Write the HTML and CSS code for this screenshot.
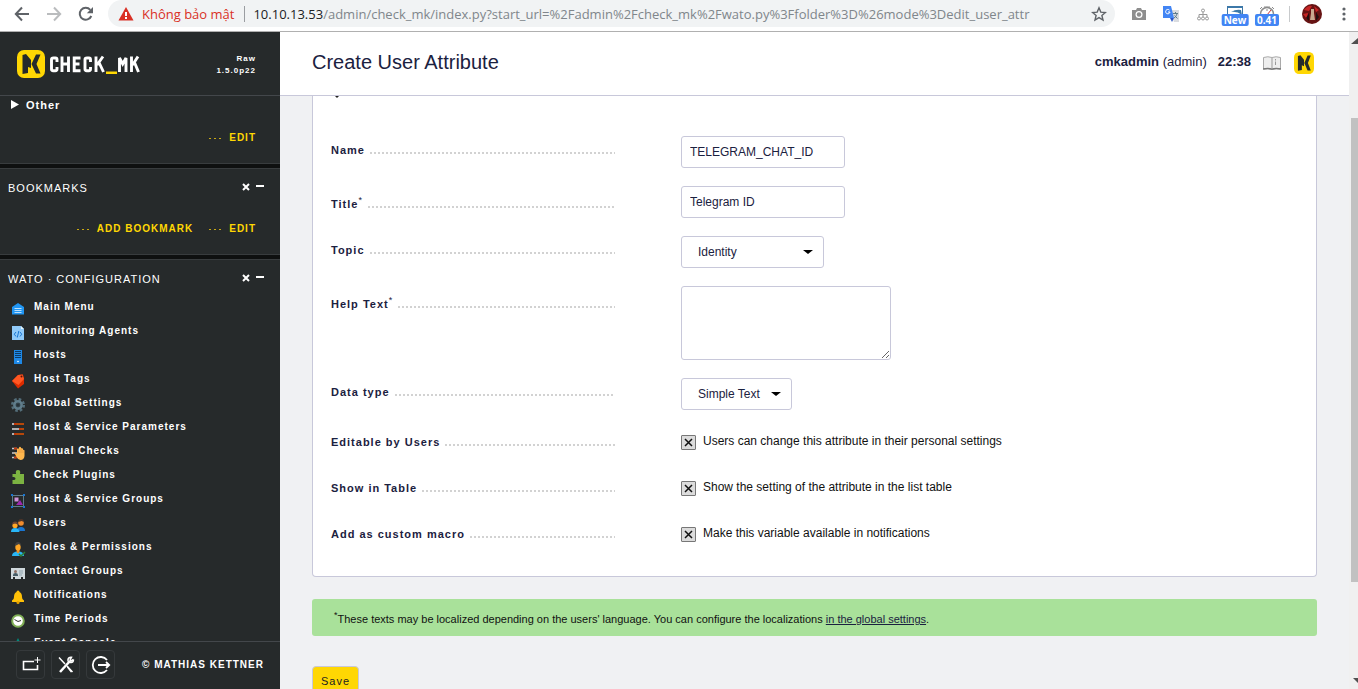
FILE: index.html
```html
<!DOCTYPE html>
<html lang="en">
<head>
<meta charset="utf-8">
<title>Create User Attribute</title>
<link rel="stylesheet" href="styles.css">
</head>
<body>
<div class="browser">
  <nav class="toolbar" aria-label="Browser">
    <button class="tool" aria-label="Back"><svg width="16" height="16" viewBox="0 0 16 16" fill="none" stroke="#5f6368" stroke-width="2"><path d="M15 8H2M8 1.500L1.800 8L8 14.500"/></svg></button>
    <button class="tool" aria-label="Forward"><svg width="16" height="16" viewBox="0 0 16 16" fill="none" stroke="#babcbe" stroke-width="2"><path d="M1 8H14M8 1.500L14.200 8L8 14.500"/></svg></button>
    <button class="tool" aria-label="Reload"><svg width="16" height="16" viewBox="0 0 16 16"><path d="M13.300 10A6 6 0 1 1 12.300 3.800" fill="none" stroke="#5f6368" stroke-width="2"/><path d="M15 1v6.200H8.800z" fill="#5f6368"/></svg></button>
    <div class="address">
      <svg width="16" height="14" viewBox="0 0 16 14"><path d="M8 0L15.500 13.500H.5z" fill="#d93025"/><path d="M7 5h2v4H7zM7 10h2v2H7z" fill="#fff"/></svg>
      <span class="insecure">Không bảo mật</span>
      <span class="url"><span class="host">10.10.13.53</span>/admin/check_mk/index.py?start_url=%2Fadmin%2Fcheck_mk%2Fwato.py%3Ffolder%3D%26mode%3Dedit_user_attr</span>
      <button class="tool" aria-label="Bookmark this page"><svg width="16" height="16" viewBox="0 0 16 16"><path d="M8 1.800l1.800 4.300 4.600.4-3.500 3 1.100 4.500L8 11.600 4 14l1.100-4.500-3.500-3 4.600-.4z" fill="none" stroke="#5f6368" stroke-width="1.400"/></svg></button>
    </div>
    <div class="extensions">
      <button class="tool" aria-label="Screenshot"><svg width="16" height="16" viewBox="0 0 16 16"><path d="M1 4h4l1-2h4l1 2h4v10H1z" fill="#8e8e8e"/><circle cx="8" cy="8.500" r="3.500" fill="#fff"/><circle cx="8" cy="8.500" r="2.200" fill="#8e8e8e"/></svg></button>
      <button class="tool" aria-label="Translate"><svg width="16" height="16" viewBox="0 0 16 16"><path d="M6 4h10v12h-5z" fill="#dadce0"/><path d="M0 0h8l3 12H0z" fill="#4285f4"/><path d="M7 12h4l-2 4z" fill="#2a56c6"/><path d="M6.500 4.200A2.200 2.200 0 1 0 7 6H5" fill="none" stroke="#fff"/><path d="M10 7.500h5M12.500 6v1.500M14 8q-1 3-3 4M11.500 9.500l3 3" stroke="#607d8b" fill="none"/></svg></button>
      <button class="tool" aria-label="Network"><svg width="16" height="16" viewBox="0 0 16 16" fill="none" stroke="#999"><circle cx="8" cy="4.500" r="1.500"/><path d="M8 6v5M4 11V8.500h8V11"/><circle cx="4" cy="12.500" r="1.500"/><circle cx="8" cy="12.500" r="1.500"/><circle cx="12" cy="12.500" r="1.500"/></svg></button>
      <button class="tool" aria-label="Picture"><svg width="16" height="16" viewBox="0 0 16 16"><path d="M.5.5h15v15H.5z" fill="#fff" stroke="#3c78a8"/><path d="M0 0h16v2H0z" fill="#3c78a8"/><path d="M4 6q5-3 10-2l1 5Q10 5 4 6" fill="#3c78a8"/></svg><span class="badge">New</span></button>
      <button class="tool" aria-label="Speed"><svg width="16" height="16" viewBox="0 0 16 16" fill="none" stroke="#8c8c8c"><circle cx="8" cy="8" r="6.500" stroke-width="1.500"/><path d="M8 9l4-5" stroke="#c33"/><path d="M5 1h6M8 3v2M1 3l2-2M15 3l-2-2"/></svg><span class="badge">0.41</span></button>
      <span class="divider"></span>
      <button class="tool" aria-label="Profile"><svg width="20" height="20" viewBox="0 0 20 20"><circle cx="10" cy="10" r="10" fill="#671313"/><path d="M2 6q4-5 8-4l-3 5zM12 2l5 4-3 2zM1 10l5-1-1 6z" fill="#c62525"/><path d="M9 5h3v4l1 7H8l1-7z" fill="#c9a98f"/><path d="M4 14l3-5v8zM14 8l3 5-3 4z" fill="#241010"/></svg></button>
      <button class="tool kebab" aria-label="Menu"><svg width="4" height="16" viewBox="0 0 4 16" fill="#5f6368"><circle cx="2" cy="3" r="1.600"/><circle cx="2" cy="8" r="1.600"/><circle cx="2" cy="13" r="1.600"/></svg></button>
    </div>
  </nav>

  <div class="page">
    <aside class="sidebar">
      <header class="brand">
        <svg width="123" height="28" viewBox="0 0 123 28" role="img" aria-label="CHECK_MK">
          <rect width="28" height="28" rx="7" fill="#ffd703"/>
          <path d="M5.500 5L9 4l5 6v8l-3-1v6l-5.500 1zM14.500 14L19 4.500h4.500L19.500 14l4 9.500H19z" fill="#262a2b"/>
          <g fill="none" stroke="#fff" stroke-width="2.900">
            <path d="M40 12V9.500q0-1.500-1.500-1.500h-2Q34.500 8 34.500 9.500v9.500q0 1.700 1.700 1.700h2.100q1.700 0 1.700-1.700v-2"/>
            <path d="M45 6.500v15.500M51.500 6.500v15.500M45 14h6.500"/>
            <path d="M63.500 8h-6.300v12.700h6.300M57.200 14h5.300"/>
            <path d="M73.500 12V9.500q0-1.500-1.500-1.500H70Q68 8 68 9.500v9.500q0 1.700 1.700 1.700h2.100q1.700 0 1.700-1.700v-2"/>
            <path d="M79 6.500v15.500M86 6.500L80 15M82 12.500L86.500 22"/>
            <path d="M102.500 22V8l3.200 6 3.300-6v14"/>
            <path d="M114.500 6.500v15.500M121 6.500L115.500 15M117.500 12.500l4 9.500"/>
          </g>
          <path d="M89 21.500h11v2.500H89z" fill="#ffd703"/>
        </svg>
        <div class="version">Raw<br>1.5.0p22</div>
      </header>

      <div class="snapins">
        <section class="snapin snapin-first">
          <button class="folder"><svg width="8" height="10" viewBox="0 0 8 10"><path d="M0 0l8 4.500L0 9z" fill="#fff"/></svg>Other</button>
          <div class="links"><a href="#">Edit</a></div>
        </section>

        <section class="snapin snapin-bookmarks">
          <div class="snapin-head"><h2>Bookmarks</h2>
            <button class="tool" aria-label="Close Bookmarks"><svg width="8" height="10" viewBox="0 0 8 10"><path d="M1 1l6 6M7 1L1 7" stroke="#fff" stroke-width="2"/></svg></button>
            <button class="tool" aria-label="Fold Bookmarks"><svg width="8" height="10" viewBox="0 0 8 10"><path d="M0 2h8v2H0z" fill="#fff"/></svg></button>
          </div>
          <div class="links"><a href="#">Add Bookmark</a><a href="#">Edit</a></div>
        </section>

        <section class="snapin">
          <div class="snapin-head"><h2>WATO · Configuration</h2>
            <button class="tool" aria-label="Close WATO"><svg width="8" height="10" viewBox="0 0 8 10"><path d="M1 1l6 6M7 1L1 7" stroke="#fff" stroke-width="2"/></svg></button>
            <button class="tool" aria-label="Fold WATO"><svg width="8" height="10" viewBox="0 0 8 10"><path d="M0 2h8v2H0z" fill="#fff"/></svg></button>
          </div>
          <ul class="menu">
            <li><a href="#"><svg width="16" height="16" viewBox="0 0 16 16"><path d="M2 6l6-4 6 4v7.500H2z" fill="#2196f3"/><path d="M4.500 7.500h7M4.500 9.500h7M4.500 11.500h7" stroke="#bbdefb"/></svg>Main Menu</a></li>
            <li><a href="#"><svg width="16" height="16" viewBox="0 0 16 16"><path d="M2 1h9l3 3v11H2z" fill="#90caf9"/><path d="M11 1v3h3z" fill="#e1f5fe"/><path d="M6 7L4.300 9.200 6 11.500M10 7l1.700 2.200L10 11.500M8.800 6L7.300 12.500" stroke="#1976d2" fill="none"/></svg>Monitoring Agents</a></li>
            <li><a href="#"><svg width="16" height="16" viewBox="0 0 16 16"><path d="M4 1h8v14H4z" fill="#1e88e5"/><path d="M5 2.500h6M5 4.500h6M5 6.500h6M5 8.500h6" stroke="#0d3c66"/><circle cx="8" cy="12.500" r=".8" fill="#fff"/></svg>Hosts</a></li>
            <li><a href="#"><svg width="16" height="16" viewBox="0 0 16 16"><path d="M2 8l6-6 5-.5 1 4.500v5l-6 4.500z" fill="#dd2c00"/><path d="M2 8l6-6 4.500-.5L14 6l-5.500 6z" fill="#ff5722"/><circle cx="11.500" cy="3.500" r="1" fill="#55170b"/></svg>Host Tags</a></li>
            <li><a href="#"><svg width="16" height="16" viewBox="0 0 16 16"><circle cx="8" cy="8" r="5.800" fill="none" stroke="#546e7a" stroke-width="2.500" stroke-dasharray="2.550 2"/><circle cx="8" cy="8" r="3.700" fill="#37474f" stroke="#607d8b" stroke-width="2.500"/><circle cx="8" cy="8" r="1.600" fill="#263238"/></svg>Global Settings</a></li>
            <li><a href="#"><svg width="16" height="16" viewBox="0 0 16 16"><path d="M2 3h3M2 8h8M2 13h3" stroke="#ddd" stroke-width="1.500"/><path d="M5 3h9M10 8h4M5 13h9" stroke="#e65100" stroke-width="1.500"/><path d="M4 2h2v2H4zM9 7h2v2H9zM4 12h2v2H4z" fill="#bf360c"/></svg>Host &amp; Service Parameters</a></li>
            <li><a href="#"><svg width="16" height="16" viewBox="0 0 16 16"><path d="M2 3.500h5M2 8h5M2 12.500h4" stroke="#ccc" stroke-width="1.500"/><path d="M4 2.500h3v2H4zM4 11.500h3v2H4z" fill="#bf360c"/><path d="M4 7l3 2V4q1-1.500 2 0V2.500q1-1.500 2 0v1q1-1 2 .500v1q1-.8 1.500.5v5.500Q14 15 10.500 15 8 15 6.500 12z" fill="#ffb74d"/><path d="M9 4v4M11 4v4M13 5v3" stroke="#d88b35" stroke-width=".5"/></svg>Manual Checks</a></li>
            <li><a href="#"><svg width="16" height="16" viewBox="0 0 16 16"><path d="M2.500 5H6q-1-4 2-4t2 4h4v10H2.500v-4q3 .5 3-1.500t-3-1.500z" fill="#7cb342"/></svg>Check Plugins</a></li>
            <li><a href="#"><svg width="16" height="16" viewBox="0 0 16 16"><path d="M2.500 2.500h11v11h-11z" fill="none" stroke="#607d8b"/><path d="M4.500 4.500h4v4h-4z" fill="#ce93d8"/><path d="M6 12l4-5 3 5z" fill="#9c27b0"/><path d="M1 1h2v2H1zM13 1h2v2h-2zM1 13h2v2H1zM13 13h2v2h-2z" fill="#1976d2"/></svg>Host &amp; Service Groups</a></li>
            <li><a href="#"><svg width="16" height="16" viewBox="0 0 16 16"><path d="M7 14q0-4 4-4t4 4z" fill="#1976d2"/><circle cx="11" cy="6" r="2.800" fill="#f08c2e"/><path d="M8.200 5q0-3 3-3t2.500 3l-2-1z" fill="#4e3428"/><path d="M1 15q0-4 4-4t4.500 4z" fill="#29b6f6"/><circle cx="5" cy="8.500" r="2.600" fill="#ffa726"/><path d="M2.200 7.500q0-3 3-3t2.500 3L5 6.500z" fill="#6d4433"/></svg>Users</a></li>
            <li><a href="#"><svg width="16" height="16" viewBox="0 0 16 16"><path d="M2 15q0-4.500 6-4.500T14 15z" fill="#29b6f6"/><path d="M7 8h2.500v3L8 12.500 6.500 11z" fill="#f28c1b"/><ellipse cx="8" cy="6" rx="2.700" ry="3.800" fill="#ffa726"/><path d="M5 5q0-4 3-4t3 4L9 3z" fill="#424242"/><path d="M9 13l2 2 4-4" fill="none" stroke="#2e7d32" stroke-width="1.500"/></svg>Roles &amp; Permissions</a></li>
            <li><a href="#"><svg width="16" height="16" viewBox="0 0 16 16"><path d="M1 3h14v11h-2v-2h-2v2H5v-2H3v2H1z" fill="#cfd8dc"/><circle cx="5.500" cy="6.500" r="1.500" fill="#8d6e63"/><path d="M3 10q0-2 2.500-2T8 10v1H3z" fill="#455a64"/><path d="M9 6h4M9 8h4M9 10h3" stroke="#90a4ae"/></svg>Contact Groups</a></li>
            <li><a href="#"><svg width="16" height="16" viewBox="0 0 16 16"><path d="M8 1.500q1.500 0 1.500 1.500 2.500 1 2.500 5 0 3 2 3.500V13H2v-1.500q2-.5 2-3.500 0-4 2.500-5Q6.500 1.500 8 1.500z" fill="#ffc107"/><circle cx="8" cy="13.500" r="1.500" fill="#e6a100"/></svg>Notifications</a></li>
            <li><a href="#"><svg width="16" height="16" viewBox="0 0 16 16"><circle cx="8" cy="8" r="5.800" fill="#fff" stroke="#7fae55" stroke-width="2"/><path d="M4.500 6.500L8 8.500l3-1" fill="none" stroke="#333"/></svg>Time Periods</a></li>
            <li><a href="#"><svg width="16" height="16" viewBox="0 0 16 16"><path d="M8 1l3 6 4 1-4 7H5L1 8l4-1z" fill="#00897b"/></svg>Event Console</a></li>
          </ul>
        </section>
      </div>

      <footer class="side-footer">
        <button class="square" aria-label="Add snapin"><svg width="20" height="20" viewBox="0 0 20 20" fill="none" stroke="#fff"><path d="M13 6.500H2.500v8h14V10" stroke-width="1.600"/><path d="M16.500 2v6M13.500 5h6"/></svg></button>
        <button class="square" aria-label="Settings"><svg width="20" height="20" viewBox="0 0 20 20" fill="none" stroke="#fff"><path d="M3 2.500L9 9M11 11l5.500 6" stroke-width="1.500"/><path d="M14 6L4 17" stroke-width="2.500"/><path d="M17.500 4.500L15 6l-1-1 1.500-2.700q-3-.3-3.500 2.200t2.500 3 3-3M11.500 12l4 5" stroke-width="1.500"/></svg></button>
        <button class="square" aria-label="Log out"><svg width="20" height="20" viewBox="0 0 20 20" fill="none" stroke="#fff" stroke-width="1.800"><path d="M16 5A8 8 0 1 0 16 15"/><path d="M7 10h11M15 7l3.200 3L15 13"/></svg></button>
        <a class="copyright" href="#">© Mathias Kettner</a>
      </footer>
    </aside>

    <div class="content">
      <header class="page-head">
        <h1>Create User Attribute</h1>
        <div class="user"><b>cmkadmin</b> (admin)</div>
        <b class="clock">22:38</b>
        <svg class="book" width="18" height="16" viewBox="0 0 18 16"><path d="M.5 2.500Q5 1 9 2.500q4-1.500 8.500 0V14Q13 13 9 14.500 5 13 .5 14z" fill="#eee" stroke="#aaa"/><path d="M0 14q5-1 9 0 4-1 9 0" stroke="#777" stroke-width="1.500" fill="none"/><path d="M9 3v11M12.500 4v1.500M12.500 6.500V10" stroke="#999"/></svg>
        <svg width="20" height="22" viewBox="0 0 28 28" preserveAspectRatio="none"><rect width="28" height="28" rx="7" fill="#ffd703"/><path d="M5.500 5L9 4l5 6v8l-3-1v6l-5.500 1zM14.500 14L19 4.500h4.500L19.500 14l4 9.500H19z" fill="#262a2b"/></svg>
      </header>

      <div class="body">
        <form class="form" onsubmit="return false">
          <div class="card">
            <svg class="fold" width="6" height="2" viewBox="0 0 6 2"><path d="M1 0h4L3 2z" fill="#222"/></svg>
            <div class="row"><label class="label" for="name"><span>Name</span></label><input class="text" id="name" value="TELEGRAM_CHAT_ID"></div>
            <div class="row"><label class="label" for="title"><span>Title<sup>*</sup></span></label><input class="text" id="title" value="Telegram ID"></div>
            <div class="row"><label class="label" for="topic"><span>Topic</span></label><select class="select topic" id="topic"><option>Identity</option></select></div>
            <div class="row"><label class="label" for="help"><span>Help Text<sup>*</sup></span></label><textarea class="text area" id="help"></textarea></div>
            <div class="row"><label class="label" for="type"><span>Data type</span></label><select class="select type" id="type"><option>Simple Text</option></select></div>
            <div class="row"><div class="label"><span>Editable by Users</span></div><label class="check"><input type="checkbox" checked>Users can change this attribute in their personal settings</label></div>
            <div class="row"><div class="label"><span>Show in Table</span></div><label class="check"><input type="checkbox" checked>Show the setting of the attribute in the list table</label></div>
            <div class="row"><div class="label"><span>Add as custom macro</span></div><label class="check"><input type="checkbox" checked>Make this variable available in notifications</label></div>
          </div>
          <p class="message"><sup>*</sup>These texts may be localized depending on the users' language. You can configure the localizations <a href="#">in the global settings</a>.</p>
          <button class="save">Save</button>
        </form>
      </div>
    </div>

    <div class="scrollbar">
      <svg width="7" height="6" viewBox="0 0 7 6"><path d="M0 6h7V0z" fill="#505050"/></svg>
      <div class="thumb"></div>
      <svg width="5" height="5" viewBox="0 0 5 5"><path d="M0 0h5v5z" fill="#505050"/></svg>
    </div>
  </div>
</div>
</body>
</html>
```

FILE: styles.css
```css
* { box-sizing: border-box; }

body {
  margin: 0;
  font-family: "Liberation Sans", Arial, sans-serif;
  font-size: 12px;
  color: #1b2140;
  overflow: hidden;
}

button { font-family: inherit; margin: 0; }
svg { display: block; flex: none; }

.browser { display: flex; flex-direction: column; height: 100vh; }

/* Browser toolbar */
.toolbar {
  display: flex;
  align-items: center;
  flex: none;
  height: 32px;
  padding: 0 12px 4px 14px;
  gap: 16px;
  background: #fff;
  border-bottom: 1px solid #b0b0b0;
}
.tool { position: relative; display: block; flex: none; padding: 0; border: 0; background: none; }
.address {
  display: flex;
  align-items: center;
  flex: 1;
  min-width: 0;
  height: 27px;
  margin-left: -2px;
  padding: 0 8px 0 10px;
  gap: 8px;
  background: #f1f3f4;
  border-radius: 14px;
  font-family: "Open Sans", "Noto Sans", sans-serif;
  font-size: 13px;
}
.insecure { color: #d93025; padding-right: 10px; border-right: 1px solid #9a9da1; line-height: 16px; white-space: nowrap; }
.url { flex: 1; min-width: 0; overflow: hidden; white-space: nowrap; color: #80868b; }
.host { color: #202124; }
.extensions { display: flex; align-items: center; gap: 16px; }
.badge {
  position: absolute;
  left: 50%;
  top: 8px;
  transform: translateX(-50%);
  padding: 0 2px;
  border-radius: 2px;
  background: #4285f4;
  color: #fff;
  font: bold 10px/12px "Open Sans", sans-serif;
}
.divider { width: 1px; height: 16px; margin: 0 -4px 0 -2px; background: #c8cacc; }
.kebab { margin-left: 4px; }

/* Page frame */
.page { display: flex; flex: 1; min-height: 0; }

/* Sidebar */
.sidebar { display: flex; flex-direction: column; flex: none; width: 280px; background: #262a2b; color: #fff; }
.brand {
  display: flex;
  justify-content: space-between;
  align-items: center;
  flex: none;
  height: 64px;
  padding: 0 24px 0 17px;
  border-bottom: 1px solid #43474b;
}
.version { font-size: 8px; line-height: 12px; font-weight: bold; letter-spacing: 1px; text-align: right; padding-top: 2px; }
.snapins { flex: 1; min-height: 0; overflow: hidden; background: #0e1010; }
.snapin { background: #262a2b; border: solid #383c3e; border-width: 1px 0; margin-bottom: 4px; }
.snapin-first { border-top: 0; height: 68px; }
.snapin-bookmarks { height: 87px; }
.folder {
  display: flex;
  align-items: center;
  gap: 7px;
  padding: 2px 0 0 11px;
  border: 0;
  background: none;
  color: #fff;
  font-size: 11px;
  line-height: 14px;
  font-weight: bold;
  letter-spacing: 1px;
}
.snapin-head { display: flex; align-items: center; gap: 6px; height: 38px; padding: 0 16px 0 8px; }
.snapin-head h2 { flex: 1; margin: 0; font-size: 11px; font-weight: normal; letter-spacing: 1px; text-transform: uppercase; }
.links { display: flex; justify-content: flex-end; gap: 16px; padding-right: 24px; line-height: 14px; }
.snapin-first .links { padding-top: 19px; }
.snapin-bookmarks .links { padding-top: 15px; }
.links a {
  display: flex;
  align-items: center;
  gap: 8px;
  color: #ffd703;
  font-size: 10px;
  font-weight: bold;
  letter-spacing: 1px;
  text-transform: uppercase;
  text-decoration: none;
}
.links a::before { content: ""; width: 12px; height: 1px; background: repeating-linear-gradient(90deg, #c9a915 0 2px, transparent 2px 5px); }
.menu { margin: 0; padding: 0; list-style: none; }
.menu a {
  display: flex;
  gap: 8px;
  height: 24px;
  padding: 3px 0 0 10px;
  color: #fff;
  font-size: 10px;
  line-height: 12px;
  font-weight: bold;
  letter-spacing: 1px;
  text-decoration: none;
}
.side-footer { display: flex; align-items: center; flex: none; gap: 6px; height: 48px; padding: 0 16px 2px; border-top: 1px solid #43474b; }
.square {
  display: flex;
  align-items: center;
  justify-content: center;
  width: 29px;
  height: 29px;
  padding: 0;
  border: 1px solid #35393b;
  border-radius: 4px;
  background: none;
}
.copyright { margin-left: auto; color: #fff; font-size: 10px; font-weight: bold; letter-spacing: 1px; text-transform: uppercase; text-decoration: none; }

/* Content */
.content { display: flex; flex-direction: column; flex: 1; min-width: 0; background: #f0f1f3; }
.page-head {
  display: flex;
  align-items: center;
  flex: none;
  height: 64px;
  padding: 0 35px 2px 32px;
  background: #fff;
  border-bottom: 1px solid #c8c8da;
}
.page-head h1 { flex: 1; margin: 0; font-size: 20px; font-weight: normal; }
.user, .clock { font-size: 13px; padding-bottom: 2px; }
.clock { margin: 0 12px 0 11px; }
.book { margin-right: 13px; }
.body { flex: 1; min-height: 0; overflow: hidden; padding: 0 32px; }
.card { display: grid; gap: 18px; padding: 0 18px 28px; background: #fff; border: 1px solid #c8c8da; border-top: 0; border-radius: 0 0 4px 4px; }
.fold { margin: 0 0 20px 3px; }
.row { display: flex; gap: 66px; align-items: flex-start; min-height: 28px; }
.label {
  display: flex;
  align-items: flex-end;
  gap: 5px;
  flex: none;
  width: 284px;
  padding-top: 7px;
  font-size: 11px;
  line-height: 14px;
  font-weight: bold;
  letter-spacing: 1px;
}
.label::after { content: ""; flex: 1; height: 2px; margin-bottom: 3px; background: repeating-linear-gradient(90deg, #d2d2d2 0 2px, transparent 2px 4px); }
sup { font-size: 9px; font-weight: normal; line-height: 14px; vertical-align: super; }
.text, .select {
  width: 164px;
  height: 32px;
  margin: 0;
  padding: 0 8px;
  border: 1px solid #c8c8da;
  border-radius: 3px;
  background: #fff;
  color: #1b2140;
  font: 12px "Liberation Sans", Arial, sans-serif;
}
.area { width: 210px; height: 74px; resize: both; }
.select {
  appearance: none;
  padding: 0 16px;
  background: url("data:image/svg+xml,%3Csvg xmlns='http://www.w3.org/2000/svg' width='10' height='4'%3E%3Cpath d='M0 0h10L5 4z'/%3E%3C/svg%3E") no-repeat right 10px center;
}
.topic { width: 143px; }
.type { width: 111px; }
.check { display: flex; gap: 7px; padding-top: 7px; line-height: 13px; color: #111; }
.check input {
  appearance: none;
  width: 15px;
  height: 15px;
  margin: 0;
  border: 1px solid #777;
  border-radius: 1px;
  background: #dcdcdc;
}
.check input:checked { background: #dcdcdc url("data:image/svg+xml,%3Csvg xmlns='http://www.w3.org/2000/svg' width='9' height='9'%3E%3Cpath d='M1 1l7 7M8 1L1 8' stroke='%23111' stroke-width='1.500'/%3E%3C/svg%3E") no-repeat center; }
.message { margin: 22px 0 30px; padding: 9px 22px; border-radius: 3px; background: #a9e19a; color: #111; font-size: 11px; line-height: 16px; }
.message a { color: #1b2140; }
.save { display: block; width: 47px; height: 30px; padding: 0; border: 1px solid #c8c8da; border-radius: 4px; background: #ffd703; color: #222; font-size: 11px; letter-spacing: 1px; }

/* Window scrollbar, partly outside of the frame */
.scrollbar { display: flex; flex-direction: column; align-items: flex-end; flex: none; width: 9px; padding: 6px 0; background: #f0f0f0; }
.thumb { flex: none; width: 7px; height: 72%; margin: 74px 0 auto; background: #c1c1c1; }
```
